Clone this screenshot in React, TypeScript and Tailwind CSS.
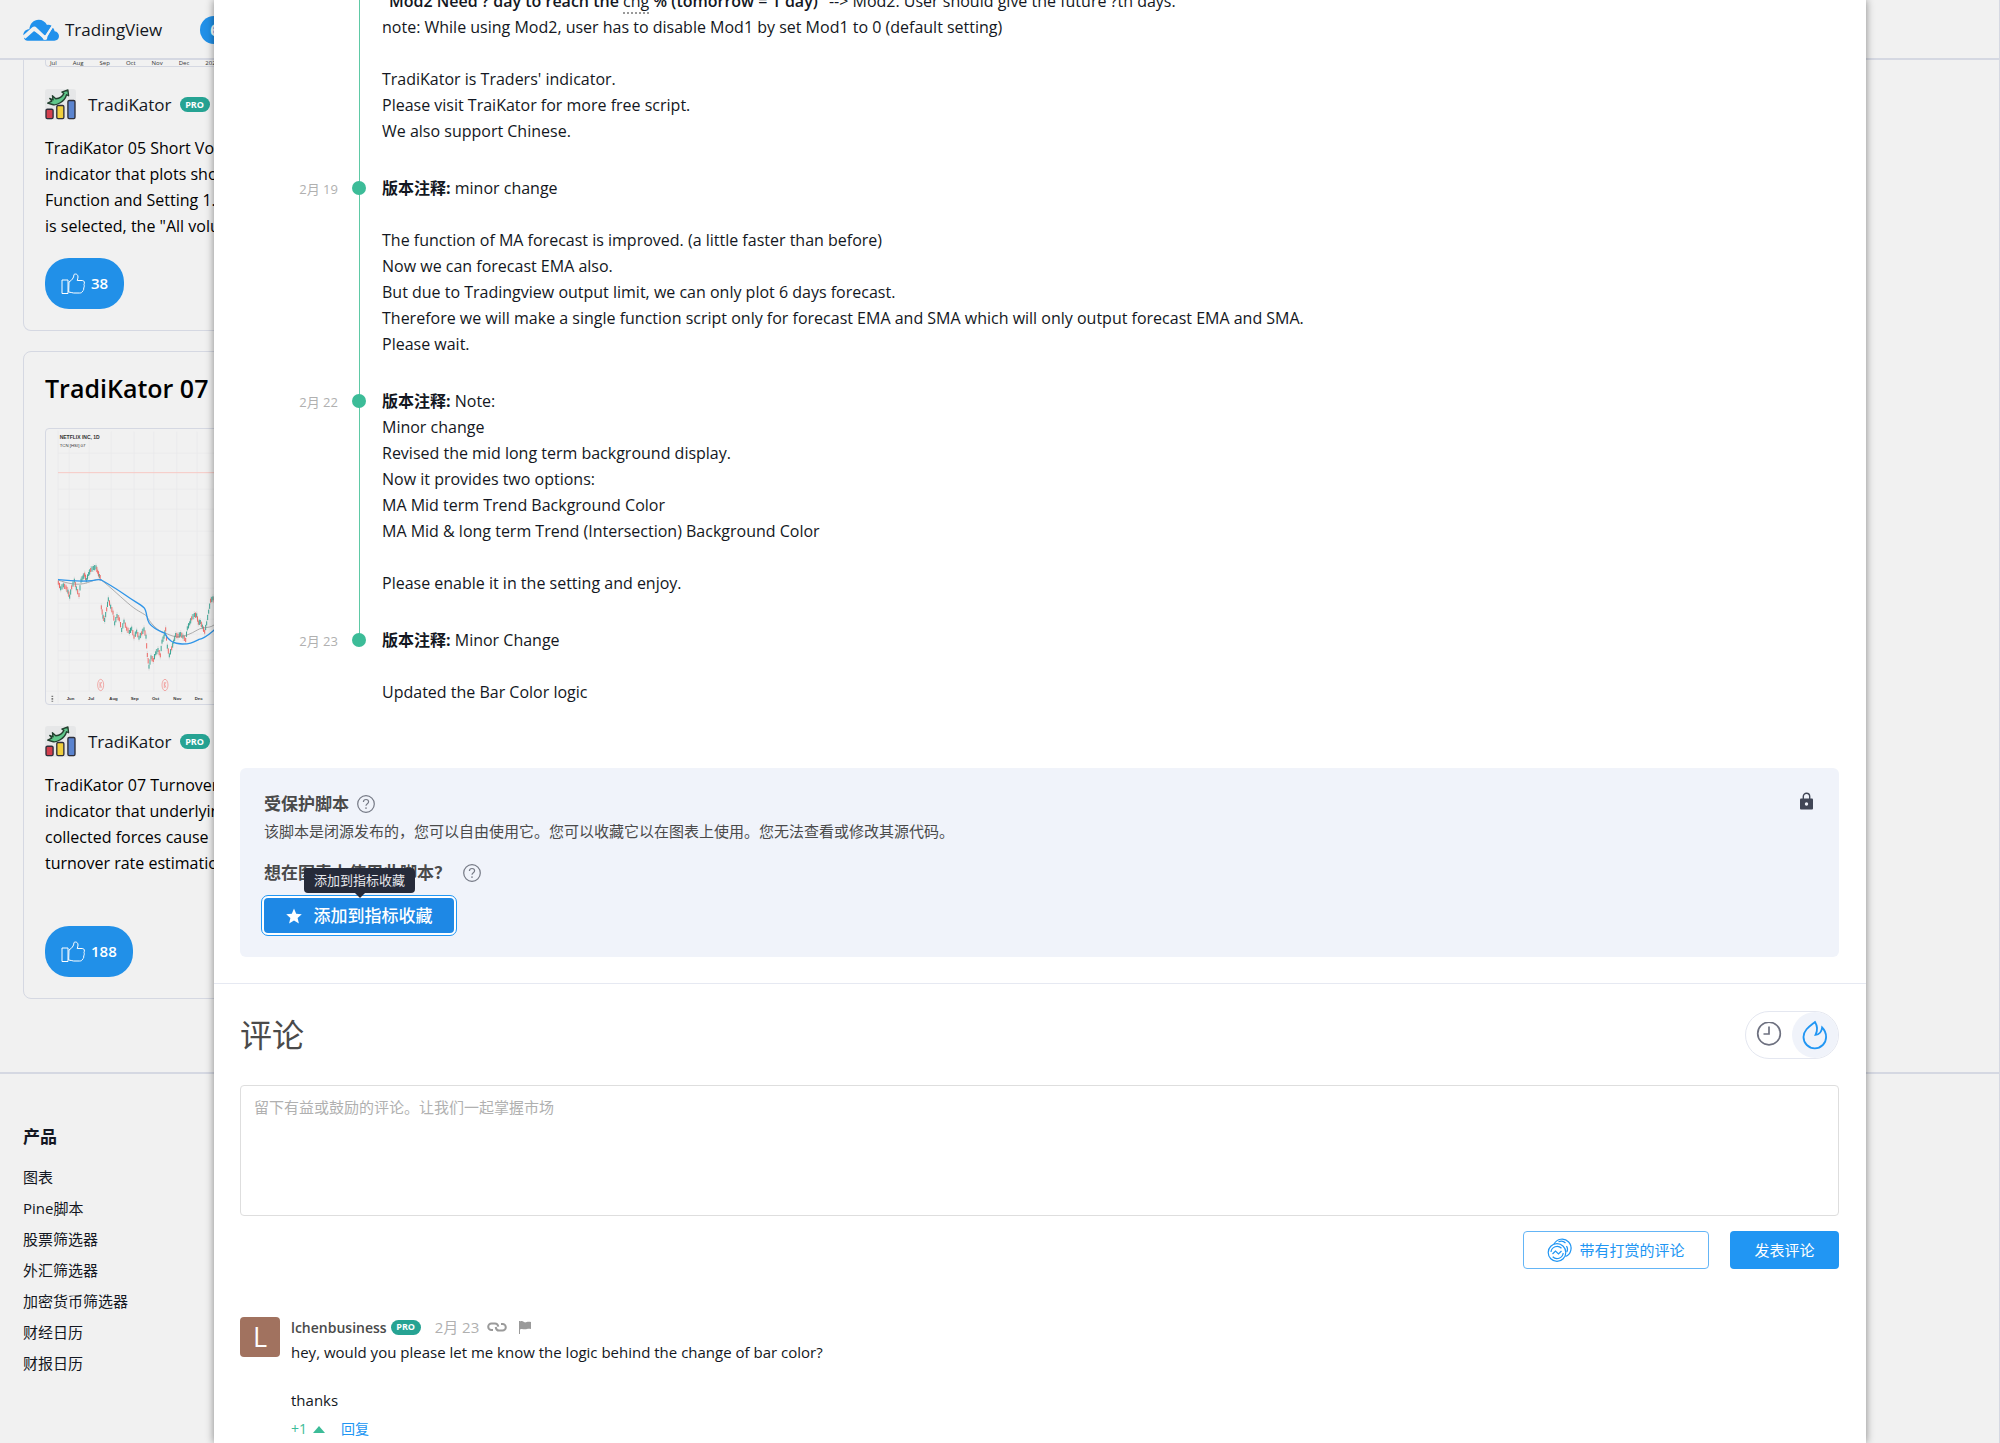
import type { ReactNode } from "react";

const FONT =
  "font-['Trebuchet_MS','Open_Sans','Noto_Sans_CJK_SC',sans-serif]";

const FOOTER_LINKS = [
  "图表",
  "Pine脚本",
  "股票筛选器",
  "外汇筛选器",
  "加密货币筛选器",
  "财经日历",
  "财报日历",
];

const MONTHS = ["Jun", "Jul", "Aug", "Sep", "Oct", "Nov", "Dec"];

const PRICE: [number, number][] = [
  [173, 728], [180, 745], [188, 736], [196, 742], [202, 755], [207, 770],
  [213, 742], [221, 722], [227, 745], [235, 765], [241, 722], [247, 712],
  [252, 704], [257, 720], [264, 702], [270, 690], [278, 684], [286, 682],
  [291, 695], [296, 708], [301, 718],
];

const PRICE_LATE: [number, number][] = [
  [302, 802], [307, 830], [312, 840], [318, 808], [323, 778], [330, 800],
  [337, 818], [342, 850], [349, 828], [356, 838], [363, 870], [370, 845],
  [378, 866], [386, 876], [393, 866], [400, 890], [408, 875], [415, 893],
  [423, 880], [430, 868], [436, 890], [440, 945], [445, 980], [451, 952],
  [458, 960], [465, 940], [472, 930], [479, 946], [484, 905], [490, 890],
  [495, 868], [500, 920], [506, 946], [513, 925], [519, 905], [525, 885],
  [532, 888], [540, 882], [547, 890], [555, 900], [560, 865], [567, 850],
  [573, 835], [581, 825], [588, 826], [593, 848], [599, 846], [605, 860],
  [612, 875], [618, 850], [624, 815], [630, 782], [637, 775], [644, 785],
];

function Candles({ points }: { points: [number, number][] }) {
  return (
    <g>
      {points.slice(1).map(([x, y], i) => {
        const [px, py] = points[i];
        const down = y > py;
        const mx = (px + x) / 2;
        const my = (py + y) / 2;
        return (
          <g key={x}>
            <line x1={px} y1={py - 12} x2={px} y2={py + 12} stroke="#b9b9bb" strokeWidth="1" />
            <line x1={px} y1={py - 6} x2={px} y2={py + 6} stroke={i % 3 ? "#3fa796" : "#ef6a66"} strokeWidth="3" />
            <line x1={mx} y1={my - 8} x2={mx} y2={my + 8} stroke={down ? "#ef6a66" : "#3fa796"} strokeWidth="3" />
          </g>
        );
      })}
    </g>
  );
}

function Chart() {
  return (
    <svg viewBox="136 267 600 825" className="block h-[275px] w-[200px]">
      <g stroke="#e9e9eb" strokeWidth="2">
        {[340, 448, 508, 574, 646, 745, 790, 838, 882, 932, 960, 1000].map((y) => (
          <line key={y} x1="172" y1={y} x2="736" y2={y} />
        ))}
        {[206, 266, 332, 400, 459, 528, 589, 650].map((x) => (
          <line key={x} x1={x} y1="275" x2={x} y2="1054" />
        ))}
        <line x1="172" y1="272" x2="172" y2="1090" />
        <line x1="136" y1="1054" x2="736" y2="1054" />
      </g>
      <line x1="172" y1="398" x2="736" y2="398" stroke="#f7c9c4" strokeWidth="3" />
      <Candles points={PRICE} />
      <Candles points={PRICE_LATE} />
      <path
        d="M172 720 C200 730 230 738 260 728 S290 716 302 720 C330 742 350 762 380 788 S420 815 438 828 C448 848 465 865 480 874 C500 880 515 892 535 890 S570 882 590 870 S630 868 645 850"
        fill="none"
        stroke="#8a8a8a"
        strokeWidth="2"
      />
      <path
        d="M172 719 C200 722 230 724 260 723 S290 716 302 720 C330 736 350 748 375 766 S415 790 430 803 C440 815 436 835 446 850 C460 868 480 874 493 880 C500 900 520 912 545 912 S575 908 595 898 C615 895 630 878 650 862"
        fill="none"
        stroke="#2f95e8"
        strokeWidth="4"
      />
      {[300, 493].map((x) => (
        <g key={x} fill="none" stroke="#f08a86" strokeWidth="2">
          <ellipse cx={x} cy="1035" rx="9" ry="17" />
          <path d={`M${x - 2} 1026v18M${x + 3} 1026l-4 8 4 9`} />
        </g>
      ))}
      <g fill="#333" fontFamily="Liberation Sans Narrow, Liberation Sans" fontSize="13">
        <text x="177" y="298" fontSize="15" fontWeight="700">NETFLIX INC, 1D</text>
        <text x="177" y="320">TCN [HSI] 07</text>
        {MONTHS.map((m, i) => (
          <text key={m} x={198 + i * 64} y="1081" fontWeight="700">{m}</text>
        ))}
      </g>
      <path d="M155 1067v4M155 1074v5M155 1082v3" stroke="#777" strokeWidth="5" />
    </svg>
  );
}

function KatorAvatar() {
  return (
    <svg viewBox="0 0 92 92" className="size-[31px] shrink-0" aria-hidden="true">
      <rect width="92" height="92" rx="8" fill="#e6e7e8" />
      <g stroke="#2f2f3a" strokeWidth="4">
        <rect x="3" y="60" width="21" height="28" rx="4" fill="#d33f4e" />
        <rect x="35" y="49" width="21" height="39" rx="4" fill="#f0cf3d" />
        <rect x="68" y="34" width="21" height="54" rx="4" fill="#5b84cf" />
      </g>
      <path
        d="M8 42 L22 46 C34 50 58 38 64 17 L70 20 L68 3 L50 9 L56 13 C52 22 42 28 32 29 L22 20 L24 32 L14 28 L20 36 Z"
        fill="#5fc78a"
        stroke="#23402f"
        strokeWidth="4"
        strokeLinejoin="round"
      />
    </svg>
  );
}

function CloudLogo() {
  return (
    <svg viewBox="0 0 108 66" className="h-[22px] w-9" aria-hidden="true">
      <path
        d="M14 65 C8 65 4 62 3 57 L34 34 L62 60 C65 62 69 61 71 57 L89 25 C92 29 94 33 95 37 C103 38 108 45 108 51 C108 60 102 65 94 65 Z"
        fill="#2191ec"
      />
      <path
        d="M1 49 C1 38 9 31 19 31 C20 14 32 2 47 2 C58 2 67 8 72 18 C77 17 82 18 86 20 L67 51 L41 26 C37 22 32 22 28 25 Z"
        fill="#2191ec"
      />
      <path d="M5 57 L33 32 L66 56 L90 20" fill="none" stroke="#f1f1f1" strokeWidth="6" />
      <circle cx="34" cy="31" r="6" fill="#f1f1f1" />
      <circle cx="66" cy="56" r="7" fill="#f1f1f1" />
    </svg>
  );
}

function ThumbIcon() {
  return (
    <svg viewBox="0 0 24 22" className="h-[22px] w-6" fill="none" stroke="currentColor" strokeLinejoin="round">
      <path d="M1 7h6v13.500h-6zM8 9c2.500-1.500 5-4 5-7.500 1.500-1 4-.5 4 2.500 0 1.500-.5 2.500-.8 3.500h5c2.500 0 2.500 2.500 1.800 4 .5 1 .3 2.500-.3 3.500.2 1.500-.2 2.500-1 3-.5 1.500-1.500 2-3 2h-6c-2 0-3-1-5-1z" />
    </svg>
  );
}

function HelpIcon() {
  return (
    <svg viewBox="0 0 18 18" className="size-[18px]" fill="none" stroke="#757985" strokeWidth="1.2">
      <circle cx="9" cy="9" r="8.300" />
      <path d="M6.400 7c0-1.600 1.100-2.500 2.600-2.500s2.600.9 2.600 2.300c0 1.900-2.600 1.900-2.600 4M9 12.300v1.600" />
    </svg>
  );
}

function TipIcon() {
  return (
    <svg viewBox="0 0 26 26" className="size-[26px]" fill="none" stroke="currentColor" strokeWidth="1.200">
      <circle cx="10" cy="15.500" r="8.800" />
      <path d="M7 7.200 A9 9 0 1 1 18.500 19.500" />
      <path d="M4 15a6.200 6.200 0 0 1 10.500-3.800M16.200 16a6.200 6.200 0 0 1-10.500 3.800" />
      <path d="M5.500 17l3-3 3 3 3-3" />
      <path d="M11.500 4.800a6 6 0 0 1 7 1.200M19.500 9a6 6 0 0 1 .3 6" />
    </svg>
  );
}

function ProBadge() {
  return (
    <span className="flex h-[15px] w-[30px] items-center justify-center rounded-full bg-[#26a393] text-[9px] font-bold text-white">
      PRO
    </span>
  );
}

function ScriptCard({ children, likes, likeGap }: { children: ReactNode; likes: number; likeGap: string }) {
  return (
    <article className="w-[760px] rounded-lg border border-[#d5d8e2] px-[21px]">
      {children}
      <button
        type="button"
        className={`${likeGap} mb-[21px] flex h-[51px] items-center gap-1.5 rounded-3xl bg-[#2190e8] px-4 text-[15px] font-semibold text-white`}
      >
        <ThumbIcon />
        {likes}
      </button>
    </article>
  );
}

function Author() {
  return (
    <div className="flex items-center gap-2">
      <KatorAvatar />
      <a href="#author" className="ml-1 text-[17px]">TradiKator</a>
      <ProBadge />
    </div>
  );
}

function Update({ date, last, children }: { date?: string; last?: boolean; children: ReactNode }) {
  return (
    <li className="flex">
      <div className="w-[97px] pt-px text-right text-[13px] leading-[26px] text-[#b0b0b0]">{date}</div>
      <div className="relative w-11 shrink-0">
        <span className={`absolute left-[21px] top-0 w-px bg-[#5ec9a5] ${last ? "h-3" : "h-full"}`} />
        {date && <span className="absolute left-[14px] top-[6px] size-[14px] rounded-full bg-[#3cbc98]" />}
      </div>
      <div className="min-h-[26px] flex-1 pb-[31px] text-base leading-[26px] text-[#131722]">{children}</div>
    </li>
  );
}

export default function App() {
  return (
    <div className={`${FONT} relative h-screen overflow-hidden border-r border-[#d5d8e2] bg-[#f1f1f1] text-[#131722]`}>
      {/* Site header */}
      <header className="relative flex h-[60px] items-center border-b-2 border-[#d5d8e2] bg-[#f1f1f1] pl-[23px] pt-0.5">
        <a href="#home" className="flex items-center gap-1.5 text-[17px]">
          <CloudLogo />
          TradingView
        </a>
        <button type="button" aria-label="6" className="ml-[38px] flex h-7 w-[90px] items-center rounded-full bg-[#2190e8] pl-2.5 text-base font-bold text-white">
          6
        </button>
      </header>

      {/* Script feed */}
      <main className="h-[1017px] border-b-2 border-[#d5d8e2] pl-[23px]">
        <div className="-mt-[3px]">
          <div className="[&>article]:rounded-t-none [&>article]:border-t-0">
            <ScriptCard likes={38} likeGap="mt-[19px]">
              <div className="w-[716px] rounded-b border border-t-0 border-[#d5d8e2] pl-1 pt-1">
                <div className="flex gap-4 text-[6px] leading-[5px] text-[#333]">
                  <span>Jul</span><span>Aug</span><span>Sep</span><span>Oct</span><span>Nov</span><span>Dec</span><span>2020</span><span>Feb</span>
                </div>
              </div>
              <div className="mt-[22px]"><Author /></div>
              <p className="mt-[15px] text-base leading-[26px] text-black">
                TradiKator 05 Short Volume<br />
                indicator that plots short<br />
                Function and Setting 1. If<br />
                is selected, the "All volume"
              </p>
            </ScriptCard>
          </div>
          <div className="mt-5">
            <ScriptCard likes={188} likeGap="mt-[50px]">
              <h2 className="mt-[16px] text-[25px] font-semibold leading-10 text-black">TradiKator 07</h2>
              <div className="mt-[20px] w-[716px] rounded border border-[#d5d8e2]">
                <Chart />
              </div>
              <div className="mt-[21px]"><Author /></div>
              <p className="mt-[15px] text-base leading-[26px] text-black">
                TradiKator 07 Turnover<br />
                indicator that underlying<br />
                collected forces cause<br />
                turnover rate estimation
              </p>
            </ScriptCard>
          </div>
        </div>
      </main>

      {/* Footer */}
      <footer className="pl-[23px] pt-[50px]">
        <h3 className="text-[17px] font-bold leading-[26px] text-[#131722]">产品</h3>
        <ul className="mt-3 text-[15px] leading-[31px]">
          {FOOTER_LINKS.map((label) => (
            <li key={label}>
              <a href="#product">{label}</a>
            </li>
          ))}
        </ul>
      </footer>

      {/* Script dialog */}
      <section
        role="dialog"
        aria-label="TradiKator"
        className="absolute inset-y-0 left-[214px] right-[133px] overflow-hidden bg-white shadow-[0_0_8px_rgba(0,0,0,0.45)]"
      >
        <ul className="-mt-[12px] pl-[27px] pr-[27px]">
          <Update>
            <b className="font-semibold">"Mod2 Need ? day to reach the <abbr className="border-b-2 border-dotted border-[#9a9a9a] font-normal no-underline">chg</abbr> % (tomorrow = 1 day)"</b> --&gt; Mod2: User should give the future ?th days.<br />
            note: While using Mod2, user has to disable Mod1 by set Mod1 to 0 (default setting)<br />
            <br />
            TradiKator is Traders' indicator.<br />
            Please visit TraiKator for more free script.<br />
            We also support Chinese.
          </Update>
          <Update date="2月 19">
            <b>版本注释:</b> minor change<br />
            <br />
            The function of MA forecast is improved. (a little faster than before)<br />
            Now we can forecast EMA also.<br />
            But due to Tradingview output limit, we can only plot 6 days forecast.<br />
            Therefore we will make a single function script only for forecast EMA and SMA which will only output forecast EMA and SMA.<br />
            Please wait.
          </Update>
          <Update date="2月 22">
            <b>版本注释:</b> Note:<br />
            Minor change<br />
            Revised the mid long term background display.<br />
            Now it provides two options:<br />
            MA Mid term Trend Background Color<br />
            MA Mid &amp; long term Trend (Intersection) Background Color<br />
            <br />
            Please enable it in the setting and enjoy.
          </Update>
          <Update date="2月 23" last>
            <b>版本注释:</b> Minor Change<br />
            <br />
            Updated the Bar Color logic
          </Update>
        </ul>

        <div className="ml-[26px] mr-[27px] mt-[32px] flex h-[189px] justify-between rounded-md bg-[#f0f3fa] px-6 pt-6 text-[#4a4a4a]">
          <div>
            <h3 className="flex items-center gap-2 text-[17px] font-bold leading-6">
              受保护脚本 <HelpIcon />
            </h3>
            <p className="text-[15px] leading-[30px]">
              该脚本是闭源发布的，您可以自由使用它。您可以收藏它以在图表上使用。您无法查看或修改其源代码。
            </p>
            <h3 className="mt-[15px] flex items-center gap-3 text-[17px] font-bold leading-6">
              想在图表上使用此脚本？ <HelpIcon />
            </h3>
            <div className="relative mt-[13px] w-fit">
              <button
                type="button"
                className="flex h-[35px] w-[190px] items-center justify-center gap-3 rounded bg-[#1e88e5] text-[17px] font-medium text-white outline-1 outline-offset-2 outline-[#2196f3] ring-2 ring-white"
              >
                <svg viewBox="0 0 16 16" className="size-4" fill="currentColor">
                  <path d="M8 .5l2.200 5.200 5.600.5-4.200 3.700 1.300 5.500L8 12.500l-4.900 2.900 1.300-5.500L.2 6.200l5.600-.5z" />
                </svg>
                添加到指标收藏
              </button>
              <span
                role="tooltip"
                className="absolute -top-[30px] left-10 flex h-[25px] w-[111px] items-center justify-center rounded-sm bg-[#262b3a] text-[13px] text-[#e6e8ec] after:absolute after:left-1/2 after:top-full after:-ml-[5px] after:border-x-[5px] after:border-t-[5px] after:border-x-transparent after:border-t-[#262b3a] after:content-['']"
              >
                添加到指标收藏
              </span>
            </div>
          </div>
          <svg viewBox="0 0 13 18" className="mr-0.5 h-[18px] w-[13px]" aria-hidden="true">
            <path d="M3.300 7V4.500a3.200 3.200 0 0 1 6.400 0V7" fill="none" stroke="#414656" strokeWidth="1.400" />
            <rect y="6.500" width="13" height="11" rx="1" fill="#414656" />
            <circle cx="6.500" cy="12" r="1.700" fill="#f0f3fa" />
          </svg>
        </div>

        {/* Comments */}
        <div className="mt-[26px] border-t border-[#e6e9f2] pl-[26px] pr-[27px] pt-[27px]">
          <div className="flex items-center justify-between">
            <h2 className="text-[32px] leading-[48px] text-[#4a4a4a]">评论</h2>
            <div className="flex h-12 w-[94px] items-center justify-between rounded-full border border-[#e4e7f0]">
              <button type="button" aria-label="最新" className="flex h-[46px] w-[46px] items-center justify-center">
                <svg viewBox="0 0 26 26" className="size-[26px]" fill="none" stroke="#6e7180" strokeWidth="1.700">
                  <circle cx="13" cy="11.500" r="11.300" />
                  <path d="M13 4.500v7.500H7.500" />
                </svg>
              </button>
              <button type="button" aria-label="热门" className="flex size-[46px] items-center justify-center rounded-full bg-[#f0f3fa]">
                <svg viewBox="0 0 26 30" className="h-[30px] w-[26px]" fill="none" stroke="#2196f3" strokeWidth="1.800">
                  <path d="M13 2C8 6 1.500 10 1.500 17a11.300 11.300 0 0 0 22.600 0c0-4-1.500-7-4-9.500-.5 4-2 7-6.600 7.300 2-3.800 2-8.800-.5-12.800z" />
                </svg>
              </button>
            </div>
          </div>

          <textarea
            aria-label="评论"
            placeholder="留下有益或鼓励的评论。让我们一起掌握市场"
            className="mt-[26px] block h-[131px] w-full resize-none rounded-sm border border-[#dedede] px-[13px] py-2.5 text-[15px] leading-[22px] placeholder:text-[#b0b0b0]"
          />

          <div className="mt-[15px] flex justify-end gap-[21px] text-[15px]">
            <button type="button" className="flex h-[38px] w-[186px] items-center justify-center gap-1.5 rounded border border-[#64b5f6] text-[#2196f3]">
              <TipIcon />
              带有打赏的评论
            </button>
            <button type="button" className="h-[38px] w-[109px] rounded bg-[#2196f3] text-white">发表评论</button>
          </div>

          <article className="mt-[48px] flex gap-[11px]">
            <div className="flex size-10 shrink-0 items-center justify-center rounded-sm bg-[#a1725f] text-[27px] font-medium text-white">L</div>
            <div>
              <div className="flex h-5 items-center text-[15px]">
                <a href="#user" className="mr-1 text-[14px] font-semibold text-[#4a4a4a]">lchenbusiness</a>
                <ProBadge />
                <span className="ml-3.5 text-[#b0b0b0]">2月 23</span>
                <svg viewBox="0 0 20 10" className="ml-2 h-2.5 w-5" fill="none" stroke="#9a9a9a" strokeWidth="2">
                  <path d="M6 8H4.500a3.300 3.300 0 0 1 0-6.600H8c2 0 3 1.600 3.300 3.300M8.700 5c.3 2 1.500 3.600 3.300 3.600h3.500a3.300 3.300 0 0 0 0-6.600H14" />
                </svg>
                <svg viewBox="0 0 12 14" className="ml-3 h-3.5 w-3" fill="#9a9a9a">
                  <path d="M0 1h1v13H0zM1 1.500c3-1.500 4 1.500 6 .8 2-.6 3-.6 5-.3v7c-3-.6-4 .3-6 .3S3 8.500 1 9.500z" />
                </svg>
              </div>
              <p className="mt-[3px] text-[15px] leading-6">
                hey, would you please let me know the logic behind the change of bar color?<br />
                <br />
                thanks
              </p>
              <div className="mt-1 flex h-6 items-center text-[14px]">
                <button type="button" aria-label="+1" className="flex items-center gap-1.5 text-[#3cbc98]">
                  +1
                  <svg viewBox="0 0 12 7" className="mt-0.5 h-[7px] w-3" fill="currentColor">
                    <path d="M6 0l6 7H0z" />
                  </svg>
                </button>
                <a href="#reply" className="ml-4 text-[#2196f3]">回复</a>
              </div>
            </div>
          </article>
        </div>
      </section>
    </div>
  );
}
